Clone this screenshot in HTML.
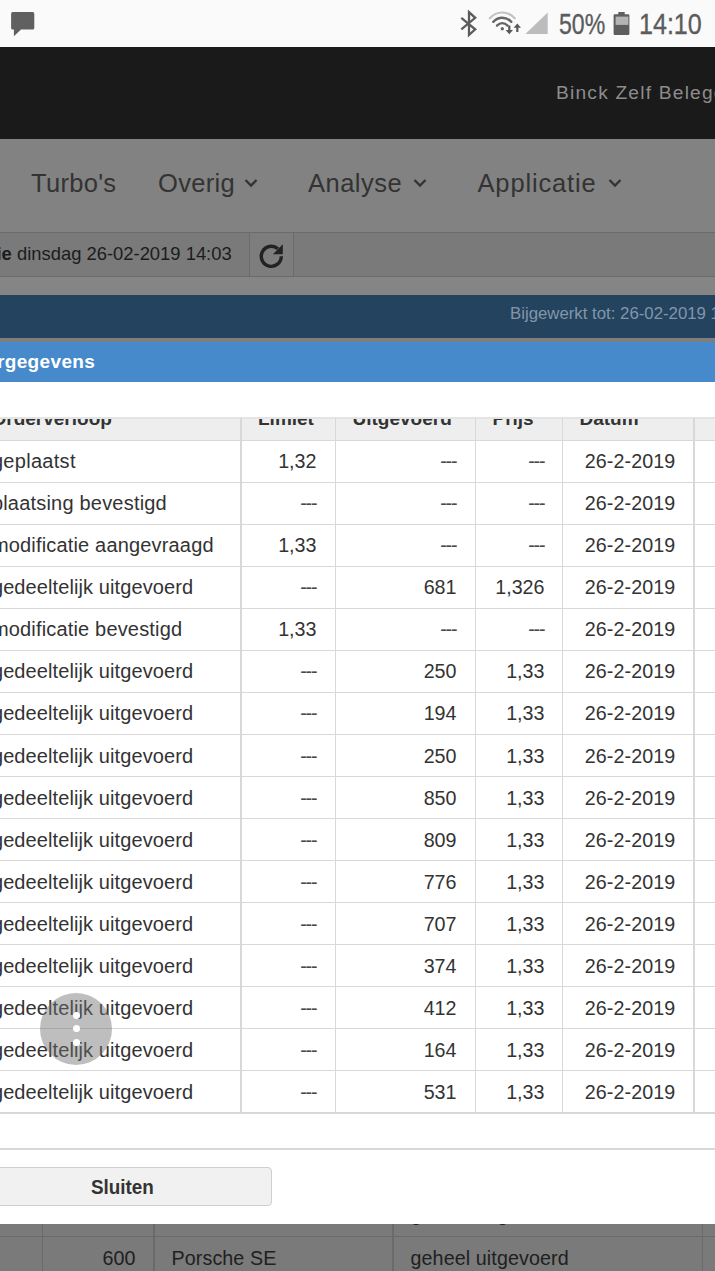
<!DOCTYPE html>
<html><head><meta charset="utf-8">
<style>
*{margin:0;padding:0;box-sizing:border-box}
html,body{width:715px;height:1271px;overflow:hidden;background:#7f7f7f;font-family:"Liberation Sans",sans-serif}
.abs{position:absolute}
#status{left:0;top:0;width:715px;height:47.4px;z-index:2;background:#fafafa}
.st{position:absolute;top:8px;font-size:29.1px;line-height:32px;color:#5c5c5c;-webkit-text-stroke:.35px #5c5c5c;white-space:nowrap;transform-origin:0 0}
#hdr{left:0;top:47px;width:715px;height:92px;background:#1a1a1a}
#hdr span{position:absolute;left:556px;top:33.7px;font-size:19.2px;line-height:24px;color:#8c8c8c;white-space:nowrap;letter-spacing:1.2px}
#nav{left:0;top:139px;width:715px;height:94px;background:#828282}
.navt{position:absolute;top:168px;font-size:25.5px;color:#333;white-space:nowrap;line-height:30px;letter-spacing:.3px}
.chev{position:absolute;top:178px;width:14px;height:10px}
#tool{left:0;top:232px;width:715px;height:45px;background:#7a7a7a;border-top:1px solid #6b6b6b;border-bottom:1px solid #6b6b6b}
#tool .t{position:absolute;left:-3.5px;top:10.3px;font-size:18.4px;line-height:22px;color:#1c1c1c;white-space:nowrap}
#tool .btn{position:absolute;left:249px;top:0;width:45px;height:43px;border-left:1px solid #6b6b6b;border-right:1px solid #6b6b6b;background:#7d7d7d}
#below{left:0;top:277px;width:715px;height:18px;background:#858585}
#bluebar{left:0;top:294.6px;width:715px;height:43.9px;background:#24435f}
#bluebar span{position:absolute;left:510px;top:9.5px;font-size:16.8px;line-height:20px;color:#8296a9;white-space:nowrap}
#gap{left:0;top:338.5px;width:715px;height:3.5px;background:#7d7d7d}
#title{left:0;top:341.7px;width:715px;height:40.6px;background:#468acb}
#title span{position:absolute;left:-3px;top:9.3px;letter-spacing:.35px;font-size:19px;line-height:22px;font-weight:700;color:#fff;white-space:nowrap}
#dlg{left:0;top:383px;width:715px;height:841px;background:#fff;overflow:hidden}
#thead{position:absolute;left:0;top:34.5px;width:715px;height:22.5px;background:#eee;overflow:hidden}
#thead span{position:absolute;top:-10.2px;font-size:19px;line-height:24px;font-weight:700;color:#333;white-space:nowrap}
.hl{position:absolute;left:0;width:715px;height:1.6px;background:#d8d8d8}
.vl{position:absolute;top:34.5px;width:1.7px;height:696px;background:#d8d8d8}
.row{position:absolute;left:0;width:715px;height:42px;border-top:1.6px solid #d8d8d8}
.c{position:absolute;top:8.5px;font-size:19.7px;line-height:24px;color:#333;white-space:nowrap}
.c1{left:-8.1px;letter-spacing:.1px;font-size:20px}
.c2{right:398.5px}
.c3{right:258.5px}
.c4{right:170.5px}
.c5{left:564.3px;width:131.6px;text-align:center;letter-spacing:.1px}
.d{letter-spacing:-1.1px;color:#484848}
#hr{position:absolute;left:0;top:765px;width:715px;height:1.6px;background:#d9d9d9}
#sluit{position:absolute;left:-10px;top:783.5px;width:282px;height:39.6px;background:#f1f1f1;border:1px solid #cfcfcf;border-radius:4px}
#sluit span{position:absolute;left:100.3px;top:7.2px;font-size:20.4px;transform:scaleX(.925);transform-origin:0 0;line-height:24px;font-weight:700;color:#333;white-space:nowrap}
#fab{left:40px;top:993px;width:72px;height:72px;border-radius:50%;background:rgba(110,110,110,.45)}
#fab i{position:absolute;left:32.5px;width:7px;height:7px;border-radius:50%;background:#fff}
#bottom{left:0;top:1224px;width:715px;height:47px;background:#7a7a7a;overflow:hidden}
#bottom .t{position:absolute;top:21.6px;font-size:19.7px;line-height:24px;color:#202020;white-space:nowrap;letter-spacing:.1px}
#bottom .v{position:absolute;top:0;width:1.6px;height:47px;background:#6a6a6a}
#bottom .h{position:absolute;left:0;top:11.5px;width:715px;height:1.6px;background:#6a6a6a}
</style></head><body>
<div id="status" class="abs">
<svg class="abs" style="left:10px;top:11px" width="26" height="27" viewBox="0 0 26 27"><path d="M2.700 1.100h20a1.600 1.600 0 0 1 1.600 1.600v14.300a1.600 1.600 0 0 1-1.600 1.600H11L3.900 25.200v-6.600H2.700a1.600 1.600 0 0 1-1.600-1.600V2.700a1.600 1.600 0 0 1 1.600-1.600z" fill="#606060"/></svg>
<svg class="abs" style="left:0;top:0" width="715" height="47" viewBox="0 0 715 47">
<path d="M461.300 17.800L475.200 29.400 469 35v-22.800l6.200 5.600L461.300 29.400" fill="none" stroke="#5c5c5c" stroke-width="2.300" stroke-linejoin="miter"/>
<path d="M489.800 18.200c7-7.600 18-7.600 25 0" fill="none" stroke="#c2c2c2" stroke-width="2.200" stroke-linecap="round"/>
<path d="M493.300 21.800c5.200-5.400 12.800-5.400 18 0" fill="none" stroke="#666" stroke-width="2.400" stroke-linecap="round"/>
<path d="M497 25.600c3.200-3.300 7.400-3.300 10.600 0" fill="none" stroke="#666" stroke-width="2.400" stroke-linecap="round"/>
<circle cx="502.300" cy="28.800" r="1.700" fill="#666"/>
<path d="M508.200 25.500h2.200v4.500h2.600l-3.700 4.300-3.700-4.300h2.600z" fill="#5a5a5a"/>
<path d="M516.200 32h2.200v-4.200h2.600l-3.700-4.300-3.700 4.300h2.600z" fill="#5a5a5a"/>
<path d="M547.700 12.500v21.500h-22.300z" fill="#bcbcbc"/>
</svg>
<span class="st" style="left:559.2px;transform:scaleX(.794)">50%</span>
<svg class="abs" style="left:613px;top:11px" width="18" height="25" viewBox="0 0 18 25"><path d="M5.300 1h6.400v2.300h3.400a1.300 1.300 0 0 1 1.300 1.300v18.100a1.300 1.300 0 0 1-1.300 1.300h-13.200a1.300 1.300 0 0 1-1.300-1.300v-18.100a1.300 1.300 0 0 1 1.300-1.300h3.400z" fill="#5e5e5e"/><rect x="2.600" y="5.600" width="12.800" height="8.300" fill="#b4b4b4"/></svg>
<span class="st" style="left:639.4px;transform:scaleX(.862)">14:10</span>
</div>
<div id="hdr" class="abs"><span>Binck Zelf Belegg</span></div>
<div id="nav" class="abs"></div>
<span class="navt" style="left:31px">Turbo's</span>
<span class="navt" style="left:158px">Overig</span>
<span class="navt" style="left:308px;letter-spacing:.5px">Analyse</span>
<span class="navt" style="left:477.5px;letter-spacing:.85px">Applicatie</span>
<svg class="chev" style="left:244px" viewBox="0 0 14 10"><path d="M1.500 2l5.500 5.500 5.500-5.500" fill="none" stroke="#333" stroke-width="2.300"/></svg>
<svg class="chev" style="left:413px" viewBox="0 0 14 10"><path d="M1.500 2l5.500 5.500 5.500-5.500" fill="none" stroke="#333" stroke-width="2.300"/></svg>
<svg class="chev" style="left:607.5px" viewBox="0 0 14 10"><path d="M1.500 2l5.500 5.500 5.500-5.500" fill="none" stroke="#333" stroke-width="2.300"/></svg>
<div id="tool" class="abs"><span class="t"><b>ie</b> dinsdag 26-02-2019 14:03</span><div class="btn">
<svg class="abs" style="left:7.500px;top:8.600px" width="28" height="28" viewBox="0 0 28 28"><path d="M23.300 14.300a10 10 0 1 1-3.400-7.500" fill="none" stroke="#222" stroke-width="3.400"/><path d="M24.800 2.300v9.900h-9.900z" fill="#222"/></svg>
</div></div>
<div id="below" class="abs"></div>
<div id="bluebar" class="abs"><span>Bijgewerkt tot: 26-02-2019 14:03</span></div>
<div id="gap" class="abs"></div>
<div class="abs" style="left:0;top:380px;width:715px;height:4px;background:#fff"></div>
<div id="title" class="abs"><span>rgegevens</span></div>
<div id="dlg" class="abs">
<div id="thead"><span style="left:-8.5px">Orderverloop</span><span style="left:258px">Limiet</span><span style="left:352.5px">Uitgevoerd</span><span style="left:492.5px">Prijs</span><span style="left:579.5px">Datum</span></div>
<div class="hl" style="top:34px;background:#e4e4e4"></div>
<div class="row" style="top:56.80px"><span class="c c1" style="letter-spacing:.3px">geplaatst</span><span class="c c2">1,32</span><span class="c c3 d">---</span><span class="c c4 d">---</span><span class="c c5">26-2-2019</span></div>
<div class="row" style="top:98.83px"><span class="c c1" style="letter-spacing:.2px">plaatsing bevestigd</span><span class="c c2 d">---</span><span class="c c3 d">---</span><span class="c c4 d">---</span><span class="c c5">26-2-2019</span></div>
<div class="row" style="top:140.86px"><span class="c c1" style="letter-spacing:.17px">modificatie aangevraagd</span><span class="c c2">1,33</span><span class="c c3 d">---</span><span class="c c4 d">---</span><span class="c c5">26-2-2019</span></div>
<div class="row" style="top:182.89px"><span class="c c1">gedeeltelijk uitgevoerd</span><span class="c c2 d">---</span><span class="c c3">681</span><span class="c c4">1,326</span><span class="c c5">26-2-2019</span></div>
<div class="row" style="top:224.92px"><span class="c c1" style="letter-spacing:.17px">modificatie bevestigd</span><span class="c c2">1,33</span><span class="c c3 d">---</span><span class="c c4 d">---</span><span class="c c5">26-2-2019</span></div>
<div class="row" style="top:266.95px"><span class="c c1">gedeeltelijk uitgevoerd</span><span class="c c2 d">---</span><span class="c c3">250</span><span class="c c4">1,33</span><span class="c c5">26-2-2019</span></div>
<div class="row" style="top:308.98px"><span class="c c1">gedeeltelijk uitgevoerd</span><span class="c c2 d">---</span><span class="c c3">194</span><span class="c c4">1,33</span><span class="c c5">26-2-2019</span></div>
<div class="row" style="top:351.01px"><span class="c c1">gedeeltelijk uitgevoerd</span><span class="c c2 d">---</span><span class="c c3">250</span><span class="c c4">1,33</span><span class="c c5">26-2-2019</span></div>
<div class="row" style="top:393.04px"><span class="c c1">gedeeltelijk uitgevoerd</span><span class="c c2 d">---</span><span class="c c3">850</span><span class="c c4">1,33</span><span class="c c5">26-2-2019</span></div>
<div class="row" style="top:435.07px"><span class="c c1">gedeeltelijk uitgevoerd</span><span class="c c2 d">---</span><span class="c c3">809</span><span class="c c4">1,33</span><span class="c c5">26-2-2019</span></div>
<div class="row" style="top:477.10px"><span class="c c1">gedeeltelijk uitgevoerd</span><span class="c c2 d">---</span><span class="c c3">776</span><span class="c c4">1,33</span><span class="c c5">26-2-2019</span></div>
<div class="row" style="top:519.13px"><span class="c c1">gedeeltelijk uitgevoerd</span><span class="c c2 d">---</span><span class="c c3">707</span><span class="c c4">1,33</span><span class="c c5">26-2-2019</span></div>
<div class="row" style="top:561.16px"><span class="c c1">gedeeltelijk uitgevoerd</span><span class="c c2 d">---</span><span class="c c3">374</span><span class="c c4">1,33</span><span class="c c5">26-2-2019</span></div>
<div class="row" style="top:603.19px"><span class="c c1">gedeeltelijk uitgevoerd</span><span class="c c2 d">---</span><span class="c c3">412</span><span class="c c4">1,33</span><span class="c c5">26-2-2019</span></div>
<div class="row" style="top:645.22px"><span class="c c1">gedeeltelijk uitgevoerd</span><span class="c c2 d">---</span><span class="c c3">164</span><span class="c c4">1,33</span><span class="c c5">26-2-2019</span></div>
<div class="row" style="top:687.25px"><span class="c c1">gedeeltelijk uitgevoerd</span><span class="c c2 d">---</span><span class="c c3">531</span><span class="c c4">1,33</span><span class="c c5">26-2-2019</span></div>

<div class="hl" style="top:729.3px"></div>
<div class="vl" style="left:240.3px"></div>
<div class="vl" style="left:334.8px"></div>
<div class="vl" style="left:474.5px"></div>
<div class="vl" style="left:561.8px"></div>
<div class="vl" style="left:693.4px"></div>
<div id="hr"></div>
<div id="sluit"><span>Sluiten</span></div>
</div>
<div id="bottom" class="abs"><div class="h"></div><div class="v" style="left:41.5px"></div><div class="v" style="left:153px"></div><div class="v" style="left:392.300px"></div><div class="v" style="left:701.500px"></div>
<span class="t" style="left:410.500px;top:-21.8px">geheel uitgevoerd</span>
<span class="t" style="left:102.500px">600</span><span class="t" style="left:171.500px">Porsche SE</span><span class="t" style="left:410.500px">geheel uitgevoerd</span></div>
<div id="fab" class="abs"><i style="top:19px"></i><i style="top:32.300px"></i><i style="top:45.500px"></i></div>
</body></html>
